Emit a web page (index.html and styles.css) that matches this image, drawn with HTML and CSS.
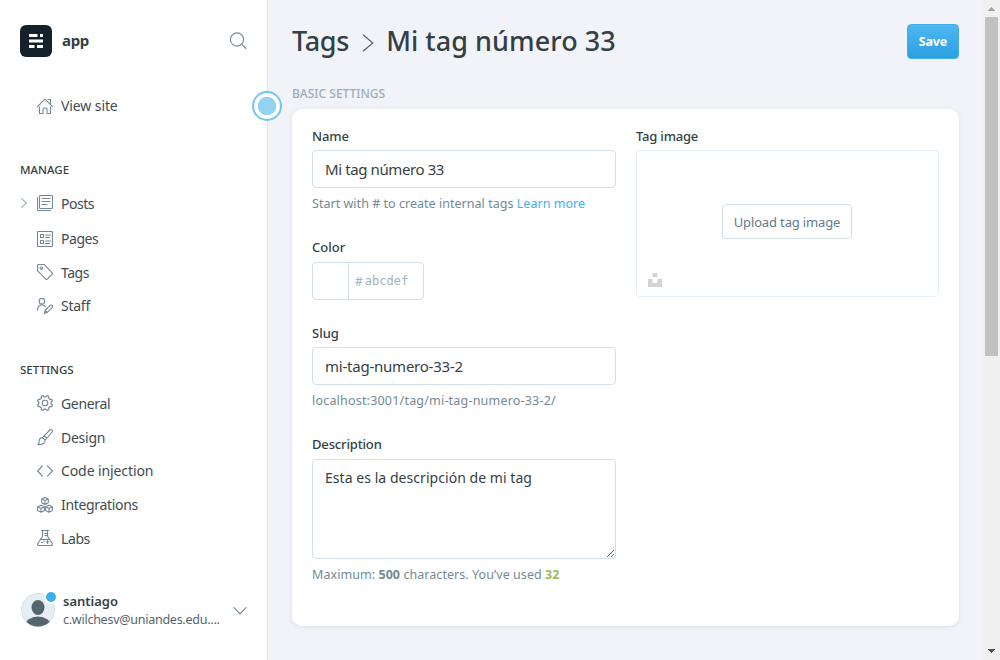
FILE: index.html
```html
<!DOCTYPE html>
<html lang="es">
<head>
<meta charset="utf-8">
<title>Tags - app</title>
<link rel="stylesheet" href="styles.css">
</head>
<body>
<div class="app">
  <aside class="sidebar">
    <header class="brand">
      <svg class="logo" viewBox="0 0 32 32"><rect width="32" height="32" rx="6" fill="#15212a"/><path fill="#fff" d="M9 9h8.500v3H9zM20 9h3v3h-3zM9 14.500h14v3H9zM9 20h5.500v3H9zM17 20h6v3h-6z"/></svg>
      <span class="brand-name">app</span>
      <svg class="icon search" viewBox="0 0 18 18"><circle cx="8" cy="7.500" r="6.600"/><path d="M12.700 12.200l4.300 4.300"/></svg>
    </header>
    <nav class="nav">
      <a class="item view-site">
        <svg class="icon" viewBox="0 0 16 16"><path d="M.5 8.600L8 1.100l7.500 7.500M11 1.500h2.500v4.800M2.500 9v6.500h3.500V11a1 1 0 0 1 1-1h2a1 1 0 0 1 1 1v4.500h3.500V9"/></svg>
        <span class="t-view">View site</span>
      </a>
      <h2 class="group manage">MANAGE</h2>
      <a class="item posts">
        <svg class="icon caret" viewBox="0 0 6 10"><path d="M.7.7L5.200 5 .7 9.300"/></svg>
        <svg class="icon" viewBox="0 0 16 16"><rect x="2.500" y=".5" width="13" height="13" rx="1"/><path d="M.5 2.500V14.500a1 1 0 0 0 1 1h12M5 3.500h8M5 6.500h8M5 9.500h5"/></svg>
        <span class="t-posts">Posts</span>
      </a>
      <a class="item">
        <svg class="icon" viewBox="0 0 16 16"><rect x=".5" y=".5" width="15" height="15" rx="1"/><path d="M3.500 3.500h3v3h-3zM3.500 9.500h3v3h-3zM8.500 4h5M8.500 6.500h4M8.500 10h5M8.500 12.500h4"/></svg>
        <span class="t-pages">Pages</span>
      </a>
      <a class="item">
        <svg class="icon" viewBox="0 0 16 16"><path d="M1.500.5h5.300a1 1 0 0 1 .7.300l7.700 8a1 1 0 0 1 0 1.400l-5 5a1 1 0 0 1-1.400 0L.9 7.200a1 1 0 0 1-.4-.7v-5a1 1 0 0 1 1-1z"/><circle cx="4.300" cy="4.200" r="1.200"/></svg>
        <span class="t-tags">Tags</span>
      </a>
      <a class="item staff">
        <svg class="icon" viewBox="0 0 16 16"><circle cx="4.900" cy="3.300" r="2.800"/><path d="M.5 12c0-3.500 2-5 4.400-5 1.400 0 2.600.5 3.300 1.400M7.500 15.500l.6-3 5.200-5.200c1.400-1 3 .6 2 2l-5.200 5.300zM8.100 12.500l2 2"/></svg>
        <span class="t-staff">Staff</span>
      </a>
      <h2 class="group settings">SETTINGS</h2>
      <a class="item">
        <svg class="icon" viewBox="0 0 16 16"><circle cx="8" cy="8" r="2.800"/><path d="M14.100 9L15.400 10 14.700 11.800 13 11.600 11.600 13 11.800 14.700 10 15.400 9 14.100H7L6 15.400 4.200 14.700 4.400 13 3 11.600 1.300 11.800.6 10 1.900 9V7L.6 6 1.300 4.200 3 4.400 4.400 3 4.200 1.300 6 .6 7 1.900H9L10 .6 11.800 1.300 11.600 3 13 4.400 14.700 4.200 15.400 6 14.100 7z"/></svg>
        <span class="t-general">General</span>
      </a>
      <a class="item">
        <svg class="icon" viewBox="0 0 16 16"><path d="M5.500 8.600L12.800 1c1.400-1.300 3.300.4 2.300 2L8.200 11zM5.500 8.600l2.700 2.400c.2 3-2.600 4.600-7.200 4.500 1.300-1.100.9-2.100 1.100-3.600.3-2 1.700-3.300 3.400-3.300zM7.300 6.800l2.400 2.300"/></svg>
        <span class="t-design">Design</span>
      </a>
      <a class="item">
        <svg class="icon" viewBox="0 0 16 16"><path d="M5.500 2.800L.6 8l4.900 5.200M10.500 2.800L15.400 8l-4.900 5.200"/></svg>
        <span class="t-code">Code injection</span>
      </a>
      <a class="item">
        <svg class="icon" viewBox="0 0 16 16"><path d="M8 .5l3.300 1.500v3.700L8 7.500 4.700 5.700V2zM4.700 2L8 3.600 11.300 2M8 3.600v3.900M4 8.300l3.400 1.500v3.700L4 15.300.6 13.500V9.800zM.6 9.800L4 11.400l3.400-1.600M4 11.400v3.900M12 8.300l3.400 1.500v3.700L12 15.300l-3.400-1.800V9.800zM8.600 9.800l3.400 1.600 3.400-1.600M12 11.400v3.900"/></svg>
        <span class="t-integrations">Integrations</span>
      </a>
      <a class="item">
        <svg class="icon" viewBox="0 0 16 16"><path d="M4.500.5h7M5.500.5v5.700L.8 13.500c-.6 1 0 2 1.100 2h12.200c1.100 0 1.700-1 1.100-2L10.500 6.200V.5M8 3.500h2.500M8 5.500h2.500M3.500 9.500h9M10.500 10.500v3M9 12h3M4.500 12.500h1M6.500 11h.6"/></svg>
        <span class="t-labs">Labs</span>
      </a>
    </nav>
    <footer class="user">
      <span class="avatar">
        <svg viewBox="0 0 34 34"><defs><clipPath id="face"><circle cx="17" cy="17" r="16.500"/></clipPath></defs><circle cx="17" cy="17" r="16.500" fill="#e5eef5" stroke="#d6dfe8"/><g clip-path="url(#face)" fill="#54666d"><ellipse cx="17" cy="14.500" rx="6.500" ry="7.500"/><ellipse cx="17" cy="33" rx="13" ry="9.500"/></g></svg>
        <i class="badge"></i>
      </span>
      <span class="who"><b class="user-name">santiago</b><span class="mail">c.wilchesv@uniandes.edu....</span></span>
      <svg class="icon down" viewBox="0 0 14 8"><path d="M1 .7l6 6.300 6-6.300"/></svg>
    </footer>
    <span class="beacon"></span>
  </aside>
  <main class="main">
    <header class="top">
      <h1 class="title"><span class="crumb">Tags</span><svg class="sep" viewBox="0 0 12 18"><path d="M1 .8L10.800 9 1 17.200"/></svg><span class="current">Mi tag número 33</span></h1>
      <button class="save">Save</button>
    </header>
    <h2 class="section">BASIC SETTINGS</h2>
    <section class="card">
      <div class="col">
        <label class="label l-name">Name</label>
        <input class="input i-name" value="Mi tag número 33">
        <p class="hint h-name">Start with # to create internal tags <a class="link">Learn more</a></p>
        <label class="label l-color">Color</label>
        <div class="color"><span class="swatch"></span><span class="hash">#</span><span class="hex">abcdef</span></div>
        <label class="label l-slug">Slug</label>
        <input class="input i-slug" value="mi-tag-numero-33-2">
        <p class="hint h-slug">localhost:3001/tag/mi-tag-numero-33-2/</p>
        <label class="label l-desc">Description</label>
        <textarea class="input area">Esta es la descripción de mi tag</textarea>
        <p class="hint h-max">Maximum: <b>500</b> characters. You’ve used <b class="ok">32</b></p>
      </div>
      <div class="col">
        <label class="label l-image">Tag image</label>
        <div class="drop">
          <button class="upload">Upload tag image</button>
          <svg class="unsplash" viewBox="0 0 14 14"><path d="M4.500 0h5v4h-5zM0 6h4.500v4h5V6H14v8H0z"/></svg>
        </div>
      </div>
    </section>
  </main>
  <div class="scroll">
    <svg class="arrow up" viewBox="0 0 7 4"><path d="M3 0h1v1h1v1h1v1h1v1H0V3h1V2h1V1h1z"/></svg>
    <i class="thumb"></i>
    <svg class="arrow dn" viewBox="0 0 7 4"><path d="M0 0h7v1H6v1H5v1H4v1H3V3H2V2H1V1H0z"/></svg>
  </div>
</div>
</body>
</html>
```
FILE: styles.css
```css
* { box-sizing: border-box; }
body { margin: 0; font-family: "Noto Sans", "Open Sans", sans-serif; color: #394047; background: #f1f3f8; overflow: hidden; }
h1, h2, p { margin: 0; }
svg { display: block; flex: none; }
.app { display: flex; width: 1000px; height: 660px; }

.sidebar { position: relative; width: 268px; flex: none; background: #fff; border-right: 1px solid #dfe5ed; display: flex; flex-direction: column; }
.brand { display: flex; align-items: center; height: 32px; margin: 25px 20px 0; }
.logo { width: 32px; height: 32px; }
.brand-name { margin-left: 10px; padding-bottom: 2px; font-size: 15px; font-weight: 700; color: #343f44; letter-spacing: -.3px; }
.icon { width: 16px; height: 16px; fill: none; stroke: #738a94; stroke-width: 1.100; stroke-linecap: round; stroke-linejoin: round; }
.search { width: 18px; height: 18px; margin-left: auto; }
.nav { display: flex; flex-direction: column; }
.item { display: flex; align-items: center; gap: 8px; height: 33.75px; padding-left: 37px; font-size: 14px; color: #3e4c53; white-space: nowrap; }
.t-view { letter-spacing: -.1px; }
.t-posts { letter-spacing: -.5px; }
.t-pages, .t-tags { letter-spacing: -.45px; }
.t-staff { letter-spacing: -.25px; }
.t-general { letter-spacing: -.35px; }
.t-design { letter-spacing: -.25px; }
.t-code { letter-spacing: -.1px; }
.t-integrations { letter-spacing: -.33px; }
.t-labs { letter-spacing: -.4px; }
.view-site { margin-top: 32px; }
.group { margin-left: 20px; height: 20px; line-height: 20px; font-size: 11.500px; font-weight: 500; color: #343f44; }
.manage { margin-top: 37.250px; }
.posts { margin-top: 6.500px; margin-bottom: 1.500px; padding-left: 21px; gap: 10px; }
.posts span { margin-left: -2px; }
.caret { width: 6px; height: 10px; stroke: #9baeb8; }
.staff { height: 33.250px; }
.settings { margin-top: 37px; margin-bottom: 7px; }

.user { display: flex; align-items: center; height: 40px; margin: 35px 20px 0 21px; }
.avatar { position: relative; width: 34px; height: 34px; }
.badge { position: absolute; right: -3px; top: -3px; width: 14px; height: 14px; border-radius: 50%; background: #3eb0ef; border: 2px solid #fff; }
.who { display: flex; flex-direction: column; margin-left: 8px; line-height: 18px; white-space: nowrap; }
.user-name { font-size: 13px; font-weight: 600; color: #343f44; }
.mail { padding-top: 1px; margin-bottom: -1px; font-size: 12.500px; letter-spacing: -.25px; color: #54666d; }
.down { width: 14px; height: 8px; margin: 2px 0 0 auto; stroke: #738a94; }
.beacon { position: absolute; left: 252px; top: 91px; width: 30px; height: 30px; border-radius: 50%; border: 2px solid #75c6f3; background: radial-gradient(circle, #95d3f5 9px, #fff 9.500px); }

.main { flex: 1; padding: 0 24px; display: flex; flex-direction: column; }
.top { display: flex; justify-content: space-between; align-items: center; height: 83px; }
.title { display: flex; align-items: center; padding-bottom: 2px; font-size: 27px; font-weight: 500; line-height: 40px; color: #343f44; white-space: nowrap; }
.crumb { letter-spacing: -.3px; }
.current { letter-spacing: .05px; }
.sep { width: 12px; height: 18px; margin: 4px 12px 0 13px; fill: none; stroke: #54606a; stroke-width: 1.200; }
.save { width: 52px; height: 35px; border: 1px solid #45aee9; border-radius: 4px; background: linear-gradient(#4fb7f0, #2a9fe2); color: #fff; font: 700 12.500px "Noto Sans", sans-serif; letter-spacing: -.15px; padding: 0; }
.section { height: 20px; line-height: 20px; margin-top: 1px; font-size: 12px; font-weight: 500; color: #9baeb8; white-space: nowrap; }
.card { display: grid; grid-template-columns: 304px 303px; column-gap: 20px; margin-top: 5px; height: 517px; padding: 18px 20px 0; background: #fff; border-radius: 10px; box-shadow: 0 1px 5px rgba(60, 80, 110, .11); }
.col { display: flex; flex-direction: column; align-items: flex-start; }
.label { height: 18px; line-height: 18px; margin-bottom: 5px; font-size: 13px; font-weight: 500; color: #343f44; white-space: nowrap; }
.l-name, .l-desc { letter-spacing: -.15px; }
.l-image { letter-spacing: -.2px; }
.input { width: 304px; height: 38px; padding: 0 12px; border: 1px solid #d2e0e9; border-radius: 4px; background: #fff; color: #343f44; font: 400 15px "Noto Sans", sans-serif; outline: none; }
.i-name { letter-spacing: -.4px; }
.i-slug { letter-spacing: -.23px; }
.hint { height: 18px; line-height: 18px; margin-top: 7px; font-size: 12.500px; color: #738a94; white-space: nowrap; }
.link { color: #3eb0ef; }
.h-name { margin-bottom: 25px; letter-spacing: .03px; }
.color { display: flex; align-items: center; width: 112px; height: 38px; margin: 1px 0 24px; border: 1px solid #d2e0e9; border-radius: 4px; color: #a0b2bc; }
.swatch { width: 36px; height: 36px; border-right: 1px solid #d2e0e9; margin-right: 6px; }
.hash { font-size: 12px; }
.hex { margin-left: 2px; font: 12px "DejaVu Sans Mono", monospace; }
.h-slug { margin-bottom: 25px; letter-spacing: .2px; }
.h-max { letter-spacing: .06px; }
.area { height: 100px; padding: 8px 12px; font-size: 14px; letter-spacing: .05px; margin-top: 1px; line-height: 20px; resize: vertical; }
.ok { color: #9fbb58; }
.drop { position: relative; display: flex; align-items: center; justify-content: center; width: 303px; height: 147px; border: 1px solid #e5eff5; border-radius: 4px; }
.upload { width: 130px; height: 35px; margin: 0 1px 4px 0; padding: 0; border: 1px solid #d3dee4; border-radius: 4px; background: #fff; color: #667b85; font: 400 13px "Noto Sans", sans-serif; letter-spacing: -.15px; white-space: nowrap; }
.unsplash { position: absolute; left: 11px; bottom: 9px; width: 14px; height: 14px; fill: #d3d3d3; }

.scroll { width: 17px; flex: none; background: #f0f0f0; display: flex; flex-direction: column; align-items: center; }
.thumb { width: 13px; height: 339px; background: #c1c1c1; margin: 6px 2px 0; }
.arrow { width: 7px; height: 4px; fill: #a3a3a3; }
.up { margin-top: 7px; }
.dn { margin-top: auto; margin-bottom: 7px; fill: #505050; }
```
